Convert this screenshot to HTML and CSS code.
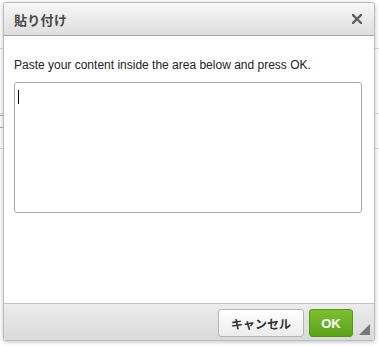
FILE: index.html
```html
<!DOCTYPE html>
<html lang="ja">
<head>
    <meta charset="UTF-8">
    <meta name="viewport" content="width=device-width, initial-scale=1.0">
    <title>貼り付け</title>
    <link rel="stylesheet" href="styles.css">
</head>
<body>

    <!-- pagina de fondo (apenas se ve detrás del diálogo) -->
    <div class="page">
        <div class="page-row row-1"></div>
        <div class="page-row row-2"><span class="page-ctrl"></span></div>
        <div class="page-row row-3"></div>
    </div>

    <div class="dialog">
        <div class="dialog-title">
            <span class="title-text">貼り付け</span>
            <svg class="close" width="10" height="10" viewBox="0 0 10 10">
                <path d="M1 1 L9 9 M9 1 L1 9" stroke="#5f5f5f" stroke-width="2.4" stroke-linecap="square"/>
            </svg>
        </div>
        <div class="dialog-body">
            <p class="hint">Paste your content inside the area below and press OK.</p>
            <div class="paste-area"><span class="caret"></span></div>
        </div>
        <div class="dialog-footer">
            <button class="btn btn-cancel">キャンセル</button>
            <button class="btn btn-ok">OK</button>
            <span class="grip"></span>
        </div>
    </div>

</body>
</html>
```

FILE: styles.css
```css
/* GENERAL */
body {
    margin: 0;
    background: #fff;
    font-family: "Liberation Sans", Arial, "Noto Sans CJK JP", sans-serif;
    color: #222;
    width: 379px;
    height: 346px;
    overflow: hidden;
    position: relative;
}

/* PAGINA DE FONDO */
.page {
    padding-top: 48px;
}
.page-row {
    border-top: 1px solid #d8d8d8;
}
.row-1 { height: 64px; }
.row-2 { height: 34px; }
.page-ctrl {
    display: inline-block;
    width: 6px;
    height: 11px;
    margin-top: 1px;
    border: 1px solid #aaa;
    border-left: none;
    border-radius: 0 3px 3px 0;
}

/* DIALOGO */
.dialog {
    position: absolute;
    left: 3px;
    top: 2px;
    width: 370px;
    height: 337px;
    border: 1px solid #bdbdbd;
    border-radius: 3px;
    background: #fff;
    box-shadow: 0 1px 4px rgba(0,0,0,0.25);
    display: flex;
    flex-direction: column;
    overflow: hidden;
}

.dialog-title {
    height: 32px;
    border-bottom: 1px solid #a4a4a4;
    background: linear-gradient(#f7f7f7, #dedede);
    display: flex;
    align-items: center;
    justify-content: space-between;
    padding: 0 12px 0 10px;
}
.title-text {
    font-family: "Noto Sans CJK JP", sans-serif;
    font-weight: bold;
    font-size: 13px;
    color: #474747;
    letter-spacing: 0.3px;
}
.close {
    display: block;
}

.dialog-body {
    flex: 1;
    padding: 21px 12px 0 10px;
}
.hint {
    margin: 0;
    font-size: 12px;
    line-height: 16px;
    color: #222;
}
.paste-area {
    margin-top: 9px;
    height: 129px;
    border: 1px solid #aaa;
    border-radius: 3px;
}
.caret {
    display: inline-block;
    width: 1px;
    height: 14px;
    margin: 7px 0 0 3px;
    background: #000;
}

/* PIE Y BOTONES */
.dialog-footer {
    height: 37px;
    border-top: 1px solid #c2c2c2;
    background: linear-gradient(#ececec, #dadada);
    display: flex;
    align-items: flex-start;
    justify-content: flex-end;
    padding: 5px 5px 0 0;
    box-sizing: border-box;
    position: relative;
}
.btn {
    height: 28px;
    border-radius: 3px;
    font-weight: bold;
    font-size: 12px;
    cursor: pointer;
    padding: 0;
    margin: 0;
}
.btn-cancel {
    width: 86px;
    font-family: "Noto Sans CJK JP", sans-serif;
    color: #333;
    border: 1px solid #b5b5b5;
    background: linear-gradient(#ffffff, #ececec);
    margin-right: 5px;
}
.btn-ok {
    width: 44px;
    font-family: "Liberation Sans", Arial, sans-serif;
    font-size: 13px;
    color: #fff;
    border: 1px solid #57961a;
    background: linear-gradient(#7cc030, #5da11b);
    margin-right: 16px;
}
.grip {
    position: absolute;
    right: 4px;
    bottom: 5px;
    width: 0;
    height: 0;
    border-left: 11px solid transparent;
    border-bottom: 11px solid #777;
}
```
